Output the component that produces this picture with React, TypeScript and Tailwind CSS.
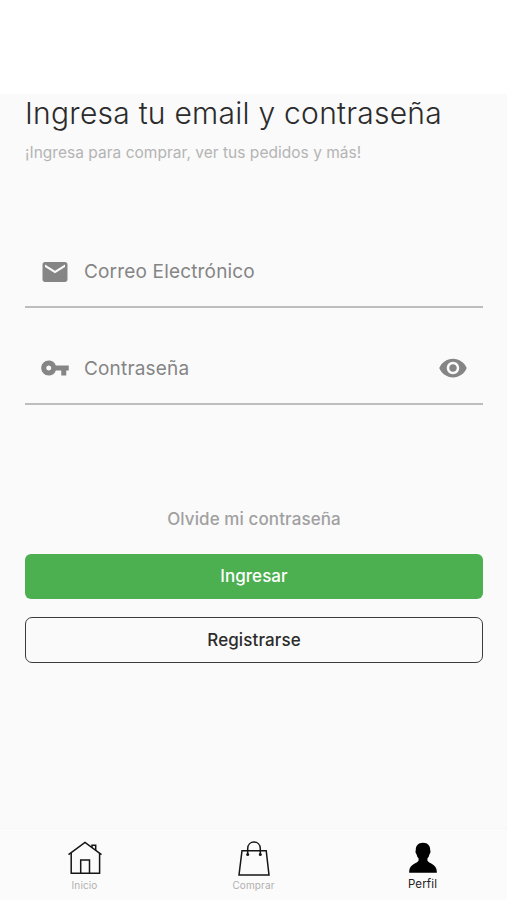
import React, { useState } from 'react'
import { MdEmail, MdRemoveRedEye, MdVpnKey } from 'react-icons/md'

interface FieldProps {
  icon: React.ReactNode
  type: string
  placeholder: string
  className?: string
  action?: React.ReactNode
}

const Field: React.FC<FieldProps> = ({ icon, type, placeholder, className = '', action }) => (
  <div className={`flex items-center border-b-2 border-[#bdbdbd] pr-[15px] pl-[15px] ${className}`}>
    {icon}
    <input
      type={type}
      placeholder={placeholder}
      aria-label={placeholder}
      className="ml-[14px] min-w-0 flex-1 bg-transparent pt-px text-[19px] leading-6 tracking-[0.17px] text-[#333333] outline-none placeholder:text-[#858585] placeholder:opacity-100"
    />
    {action}
  </div>
)

const HomeIcon = () => (
  <svg className="h-9 w-9" viewBox="0 0 36 36" fill="none" stroke="#151515" strokeWidth="1.5">
    <path d="M1.5 14.7 L18 2.4 L34.5 14.7" />
    <path d="M4.2 13 V33.2 H32.6 V13" />
    <path d="M13.7 33.2 V19.9 H22.5 V33.2" />
    <path d="M25 7.4 V5.3 H28.7 V10.2" />
  </svg>
)

const BagIcon = () => (
  <svg className="h-9 w-9" viewBox="0 0 36 36" fill="none" stroke="#151515" strokeWidth="1.5">
    <path d="M6 10.7 H30.2 L33 35 H3 Z" />
    <path d="M11.7 14.7 V8.7 C11.7 -0.1 24.3 -0.1 24.3 8.7 V14.7" />
    <circle cx="11.7" cy="14.6" r="1.5" fill="#151515" stroke="none" />
    <circle cx="24.3" cy="14.6" r="1.5" fill="#151515" stroke="none" />
  </svg>
)

const ProfileIcon = () => (
  <svg className="h-9 w-9" viewBox="0 0 36 36" fill="#000000">
    <path d="M18 2.8 C23 2.8 25.4 6 25.2 10.3 C25.9 10.8 25.5 13.4 24.5 14.2 C24.1 16 23.4 17.4 22.4 18.6 V20.6 C23.4 23.6 31.8 24.2 31.8 31.5 V32.7 H4.2 V31.5 C4.2 24.2 12.6 23.6 13.6 20.6 V18.6 C12.6 17.4 11.9 16 11.5 14.2 C10.5 13.4 10.1 10.8 10.8 10.3 C10.6 6 13 2.8 18 2.8 Z" />
  </svg>
)

const tabs = [
  { label: 'Inicio', icon: <HomeIcon />, style: 'pt-px text-[10px] tracking-[0.12px] text-[#b0b0b0]' },
  { label: 'Comprar', icon: <BagIcon />, style: 'pt-px text-[10px] tracking-[0.12px] text-[#b0b0b0]' },
  { label: 'Perfil', icon: <ProfileIcon />, style: 'text-[11.5px] tracking-[0.15px] text-[#222222]' },
]

export default function App() {
  const [visible, setVisible] = useState(false)

  return (
    <div className="flex h-[900px] w-[507px] flex-col overflow-hidden bg-white pt-[94px] font-['Inter',sans-serif]">
      <main className="flex flex-1 flex-col bg-[#fafafa] pr-6 pl-[25px]">
        <h1 className="text-[30px] leading-[38px] font-light tracking-[0.25px] whitespace-nowrap text-[#2b2b2b]">
          Ingresa tu email y contraseña
        </h1>
        <p className="mt-[11px] text-[15.5px] leading-5 tracking-[0.02px] whitespace-nowrap text-[#b4b4b4]">
          ¡Ingresa para comprar, ver tus pedidos y más!
        </p>

        <Field
          icon={<MdEmail className="size-[30px] text-[#858585]" />}
          type="email"
          placeholder="Correo Electrónico"
          className="mt-[74px] h-[71px]"
        />
        <Field
          icon={<MdVpnKey className="size-[30px] text-[#858585]" />}
          type={visible ? 'text' : 'password'}
          placeholder="Contraseña"
          className="mt-[25px] h-[72px]"
          action={
            <button type="button" onClick={() => setVisible(!visible)} aria-label="Mostrar contraseña">
              <MdRemoveRedEye className="size-[30px] text-[#858585]" />
            </button>
          }
        />

        <button
          type="button"
          className="mt-[102px] text-[17px] leading-6 font-medium tracking-[0.1px] text-[#a0a0a0]"
        >
          Olvide mi contraseña
        </button>
        <button
          type="button"
          className="mt-[23px] h-[45px] rounded-md bg-[#4caf50] text-[17px] font-medium tracking-[0.05px] text-white"
        >
          Ingresar
        </button>
        <button
          type="button"
          className="mt-[18px] h-[46px] rounded-[7px] border-[1.5px] border-[#3c3c3c] pt-px text-[17px] font-medium tracking-[0.1px] text-[#2b2b2b]"
        >
          Registrarse
        </button>
      </main>

      <nav className="grid h-[72px] grid-cols-3 border-t border-[#f7f7f7] bg-[#fbfbfb]">
        {tabs.map((tab) => (
          <button key={tab.label} type="button" className="flex flex-col items-center pt-[11px]">
            {tab.icon}
            <span className={`leading-[17px] ${tab.style}`}>{tab.label}</span>
          </button>
        ))}
      </nav>
    </div>
  )
}
